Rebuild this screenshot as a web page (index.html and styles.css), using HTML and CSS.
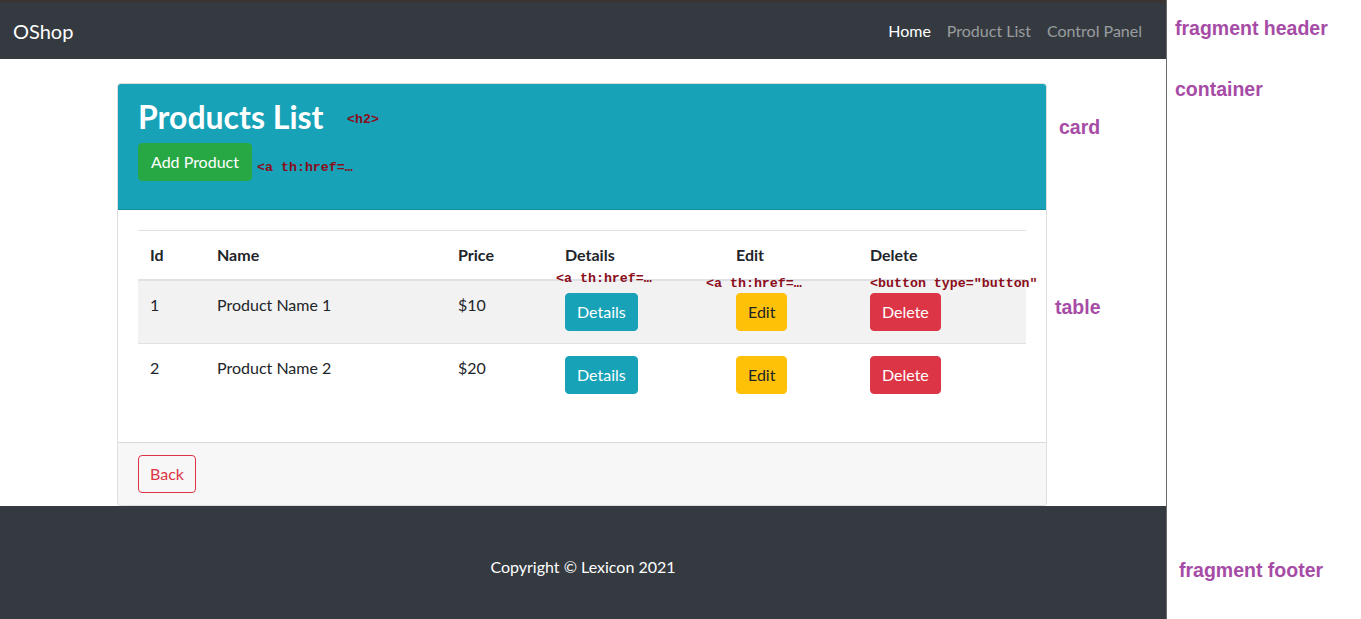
FILE: index.html
```html
<!DOCTYPE html>
<html lang="en">
<head>
<meta charset="utf-8">
<title>OShop - Products List</title>
<link rel="stylesheet" href="styles.css">
</head>
<body>
<div class="shell">
  <div class="page">
    <nav class="navbar">
      <a class="brand" href="#">OShop</a>
      <ul class="nav">
        <li><a class="nav-link active" href="#">Home</a></li>
        <li><a class="nav-link" href="#">Product List</a></li>
        <li><a class="nav-link" href="#">Control Panel</a></li>
      </ul>
    </nav>
    <main class="container">
      <div class="card">
        <div class="card-header">
          <h2 class="title">Products List</h2>
          <div class="header-actions">
            <a class="btn btn-success" href="#">Add Product</a>
          </div>
        </div>
        <div class="card-body">
          <table class="table">
            <thead>
              <tr>
                <th class="c-id">Id</th>
                <th class="c-name">Name</th>
                <th class="c-price">Price</th>
                <th class="c-details">Details</th>
                <th class="c-edit">Edit</th>
                <th class="c-delete">Delete</th>
              </tr>
            </thead>
            <tbody>
              <tr class="striped">
                <td>1</td>
                <td>Product Name 1</td>
                <td>$10</td>
                <td><a class="btn btn-info" href="#">Details</a></td>
                <td><a class="btn btn-warning" href="#">Edit</a></td>
                <td><button type="button" class="btn btn-danger">Delete</button></td>
              </tr>
              <tr>
                <td>2</td>
                <td>Product Name 2</td>
                <td>$20</td>
                <td><a class="btn btn-info" href="#">Details</a></td>
                <td><a class="btn btn-warning" href="#">Edit</a></td>
                <td><button type="button" class="btn btn-danger">Delete</button></td>
              </tr>
            </tbody>
          </table>
        </div>
        <div class="card-footer">
          <a class="btn btn-outline-danger" href="#">Back</a>
        </div>
      </div>
    </main>
    <footer class="footer">Copyright © Lexicon 2021</footer>
  </div>
  <aside class="notes"></aside>

  <span class="tag tag-h2">&lt;h2&gt;</span>
  <span class="tag tag-add">&lt;a th:href=…</span>
  <span class="tag tag-details">&lt;a th:href=…</span>
  <span class="tag tag-edit">&lt;a th:href=…</span>
  <span class="tag tag-delete">&lt;button type="button"</span>

  <span class="label label-header">fragment header</span>
  <span class="label label-container">container</span>
  <span class="label label-card">card</span>
  <span class="label label-table">table</span>
  <span class="label label-footer">fragment footer</span>
</div>
</body>
</html>
```

FILE: styles.css
```css
* { box-sizing: border-box; }
html, body { margin: 0; padding: 0; overflow: hidden; }
body {
  font-family: "Lato", "Open Sans", sans-serif;
  font-size: 16px;
  line-height: 1.5;
  color: #212529;
  background: #fff;
}
.shell {
  position: relative;
  display: flex;
  width: 1361px;
  height: 619px;
}
.page {
  width: 1167px;
  padding-right: 2px;
  border-right: 1px solid #6a6a6a;
  display: flex;
  flex-direction: column;
}
.notes { flex: 1; background: #fff; }

/* navbar */
.navbar {
  background: #343a40;
  border-top: 3px solid #3a3533;
  height: 59px;
  margin-right: -2px;
  padding: 8px 16px;
  display: flex;
  align-items: center;
  justify-content: space-between;
}
.brand {
  color: #fff;
  text-decoration: none;
  font-size: 20px;
  line-height: 30px;
  padding: 5px 0;
  margin-left: -3px;
}
.nav { list-style: none; margin: 0; padding: 0; display: flex; }
.nav-link {
  display: block;
  padding: 8px 8px;
  color: rgba(255,255,255,.5);
  text-decoration: none;
}
.nav-link.active { color: #fff; }

/* container & card */
.container {
  width: 960px;
  margin: 24px auto 0;
  padding: 0 15px;
}
.card {
  border: 1px solid rgba(0,0,0,.125);
  border-radius: 4px;
  background: #fff;
  overflow: hidden;
}
.card-header {
  background: #17a2b8;
  color: #fff;
  padding: 12px 20px;
  border-bottom: 1px solid rgba(0,0,0,.125);
  height: 126px;
}
.title {
  margin: 2px 0 7px;
  font-size: 32px;
  font-weight: 700;
  line-height: 1.2;
}
.header-actions { display: flex; }
.card-body { padding: 20px; }
.card-footer {
  background: #f7f7f7;
  border-top: 1px solid rgba(0,0,0,.125);
  padding: 12px 20px;
}

/* table */
.table {
  width: 100%;
  border-collapse: collapse;
  margin-bottom: 16px;
  table-layout: fixed;
}
.table th, .table td {
  padding: 12px;
  text-align: left;
  vertical-align: top;
  border-top: 1px solid #dee2e6;
}
.table thead th {
  border-bottom: 2px solid #dee2e6;
  font-weight: 700;
}
.table tbody tr:first-child td { border-top: 0; }
.striped { background: #f2f2f2; }
.c-id { width: 67px; }
.c-name { width: 241px; }
.c-price { width: 107px; }
.c-details { width: 171px; }
.c-edit { width: 134px; }
.c-delete { width: 168px; }

/* buttons */
.btn {
  display: inline-block;
  font-family: inherit;
  font-size: 16px;
  line-height: 24px;
  padding: 6px 11px;
  border: 1px solid transparent;
  border-radius: 4px;
  text-decoration: none;
  cursor: pointer;
}
.btn-success { background: #28a745; border-color: #28a745; color: #fff; padding: 6px 12px; }
.btn-info { background: #17a2b8; border-color: #17a2b8; color: #fff; }
.btn-warning { background: #ffc107; border-color: #ffc107; color: #212529; }
.btn-danger { background: #dc3545; border-color: #dc3545; color: #fff; }
.btn-outline-danger { background: transparent; border-color: #dc3545; color: #dc3545; }

/* footer */
.footer {
  flex: 1;
  margin-right: -2px;
  background: #343a40;
  color: #fff;
  text-align: center;
  padding-top: 49px;
}

/* overlay annotations */
.tag {
  position: absolute;
  font-family: "Liberation Mono", monospace;
  font-weight: 700;
  font-size: 13.3px;
  line-height: 14px;
  color: #8b0d1a;
  white-space: nowrap;
}
.tag-h2 { left: 347px; top: 113px; }
.tag-add { left: 257px; top: 161px; }
.tag-details { left: 556px; top: 272px; }
.tag-edit { left: 706px; top: 277px; }
.tag-delete { left: 870px; top: 277px; }

.label {
  position: absolute;
  font-family: "Liberation Sans", Arial, sans-serif;
  font-weight: 700;
  font-size: 19.5px;
  line-height: 22px;
  color: #a64ca6;
  white-space: nowrap;
}
.label-header { left: 1175px; top: 17px; }
.label-container { left: 1175px; top: 78px; }
.label-card { left: 1059px; top: 116px; }
.label-table { left: 1055px; top: 296px; }
.label-footer { left: 1179px; top: 559px; }
```
